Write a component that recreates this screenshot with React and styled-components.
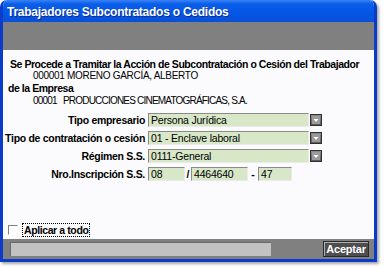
import React from "react";
import styled, { createGlobalStyle } from "styled-components";

const Global = createGlobalStyle`
  html, body { margin: 0; padding: 0; background: #ffffff; }
  body { font-family: "Liberation Sans", Arial, sans-serif; }
`;

const Page = styled.div`
  width: 384px;
  height: 268px;
  background: #ffffff;
  overflow: hidden;
`;

const Window = styled.div`
  width: 377px;
  height: 262px;
  box-sizing: border-box;
  display: flex;
  flex-direction: column;
  border: 3px solid #0a3cc8;
  border-top: none;
  border-radius: 7px 7px 0 0;
  background: #fbfbfd;
  box-shadow: 2px 2px 3px rgba(0, 0, 0, 0.35);
  overflow: hidden;
`;

const TitleBar = styled.div`
  height: 22px;
  margin: 0 -3px;
  padding: 2px 0 0 7px;
  box-sizing: border-box;
  display: flex;
  align-items: center;
  background: linear-gradient(#3a82f8 0%, #0a5ee8 18%, #0456e4 60%, #0a50d8 100%);
  color: #ffffff;
  font-weight: bold;
  font-size: 12px;
  letter-spacing: -0.25px;
  text-shadow: 1px 1px 0 #0a2a90;
  border-radius: 7px 7px 0 0;
`;

const Band = styled.div`
  height: 28px;
  background: #808080;
`;

const Content = styled.div`
  flex: 1;
  padding: 9px 0 0 5px;
  display: flex;
  flex-direction: column;
  color: #000;
`;

const Bold = styled.div`
  font-weight: bold;
  font-size: 10.5px;
  letter-spacing: -0.45px;
  height: ${(p) => p.$h || 12}px;
  line-height: ${(p) => p.$h || 12}px;
  white-space: nowrap;
  padding-left: ${(p) => p.$indent || 0}px;
`;

const Line = styled.div`
  display: flex;
  height: ${(p) => p.$h || 12}px;
  line-height: ${(p) => p.$h || 12}px;
  padding-left: 25px;
  white-space: nowrap;
  font-size: 10px;
  letter-spacing: ${(p) => p.$ls}px;
`;

const Code = styled.span`
  width: ${(p) => p.$w}px;
`;

const Form = styled.div`
  margin: 6px 0 0 -6px;
  display: grid;
  grid-template-columns: 143px auto;
  column-gap: 3px;
  row-gap: 4px;
  align-items: center;
`;

const Label = styled.div`
  text-align: right;
  font-weight: bold;
  font-size: 10.5px;
  letter-spacing: -0.3px;
  white-space: nowrap;
`;

const FieldRow = styled.div`
  display: flex;
  align-items: center;
`;

const Field = styled.div`
  width: ${(p) => p.$w}px;
  height: 14px;
  box-sizing: border-box;
  background: #d7e7c7;
  border-top: 1px solid #8a8a8a;
  border-left: 1px solid #8a8a8a;
  border-right: 1px solid #eaeaea;
  border-bottom: 1px solid #eaeaea;
  font-size: 10.5px;
  line-height: 12px;
  padding-left: 2px;
  letter-spacing: -0.2px;
  overflow: hidden;
  white-space: nowrap;
`;

const DropBtn = styled.div`
  width: 12px;
  height: 12px;
  margin-left: 1px;
  box-sizing: border-box;
  background: linear-gradient(#8a8a8a, #5a5a5a);
  border: 1px solid #303030;
  display: flex;
  align-items: center;
  justify-content: center;
`;

const Sep = styled.span`
  width: ${(p) => p.$w}px;
  text-align: center;
  font-weight: bold;
  font-size: 10.5px;
`;

const Spacer = styled.div`
  flex: 1;
`;

const CheckRow = styled.div`
  display: flex;
  align-items: center;
  gap: 4px;
  margin-bottom: 2px;
`;

const Check = styled.div`
  width: 10px;
  height: 10px;
  box-sizing: border-box;
  border-top: 1px solid #808080;
  border-left: 1px solid #808080;
  border-right: 1px solid #ffffff;
  border-bottom: 1px solid #ffffff;
  background: #ffffff;
`;

const CheckLabel = styled.div`
  font-weight: bold;
  font-size: 10.5px;
  letter-spacing: -0.4px;
  border: 1px dotted #000;
  padding: 0 1px;
  line-height: 12px;
`;

const Footer = styled.div`
  height: 20px;
  background: #808080;
  display: flex;
  align-items: flex-start;
  padding: 3px 5px 0 7px;
  box-sizing: border-box;
`;

const Status = styled.div`
  width: 261px;
  height: 14px;
  box-sizing: border-box;
  background: #c2c2c2;
  border-top: 1px solid #6a6a6a;
  border-left: 1px solid #6a6a6a;
`;

const Button = styled.div`
  margin-left: auto;
  width: 46px;
  height: 16px;
  margin-top: -1px;
  box-sizing: border-box;
  text-align: center;
  background: #4e4e50;
  border: 1px solid #2a2a2a;
  box-shadow: inset 1px 1px 0 #b0b0b0;
  color: #ffffff;
  font-weight: bold;
  font-size: 11px;
  letter-spacing: -0.2px;
  line-height: 14px;
`;

const Arrow = () => (
  <svg width="8" height="8" viewBox="0 0 8 8">
    <rect x="0" y="0" width="8" height="8" fill="#9a9a9a" />
    <path d="M1.5 3 L6.5 3 L4 6 Z" fill="#ffffff" />
  </svg>
);

const Select = ({ value }) => (
  <FieldRow>
    <Field $w={161}>{value}</Field>
    <DropBtn>
      <Arrow />
    </DropBtn>
  </FieldRow>
);

export default function App() {
  return (
    <Page>
      <Global />
      <Window>
        <TitleBar>Trabajadores Subcontratados o Cedidos</TitleBar>
        <Band />
        <Content>
          <Bold $indent={2} $h={11}>Se Procede a Tramitar la Acción de Subcontratación o Cesión del Trabajador</Bold>
          <Line $ls={-0.3}>000001 MORENO GARCÍA, ALBERTO</Line>
          <Bold $indent={0}>de la Empresa</Bold>
          <Line $h={13} $ls={-0.8}>
            <Code $w={30}>00001</Code>
            <span>PRODUCCIONES CINEMATOGRÁFICAS, S.A.</span>
          </Line>
          <Form>
            <Label>Tipo empresario</Label>
            <Select value="Persona Jurídica" />
            <Label>Tipo de contratación o cesión</Label>
            <Select value="01 - Enclave laboral" />
            <Label>Régimen S.S.</Label>
            <Select value="0111-General" />
            <Label>Nro.Inscripción S.S.</Label>
            <FieldRow>
              <Field $w={37}>08</Field>
              <Sep $w={6}>/</Sep>
              <Field $w={57}>4464640</Field>
              <Sep $w={10}>-</Sep>
              <Field $w={34}>47</Field>
            </FieldRow>
          </Form>
          <Spacer />
          <CheckRow>
            <Check />
            <CheckLabel>Aplicar a todo</CheckLabel>
          </CheckRow>
        </Content>
        <Footer>
          <Status />
          <Button>Aceptar</Button>
        </Footer>
      </Window>
    </Page>
  );
}
